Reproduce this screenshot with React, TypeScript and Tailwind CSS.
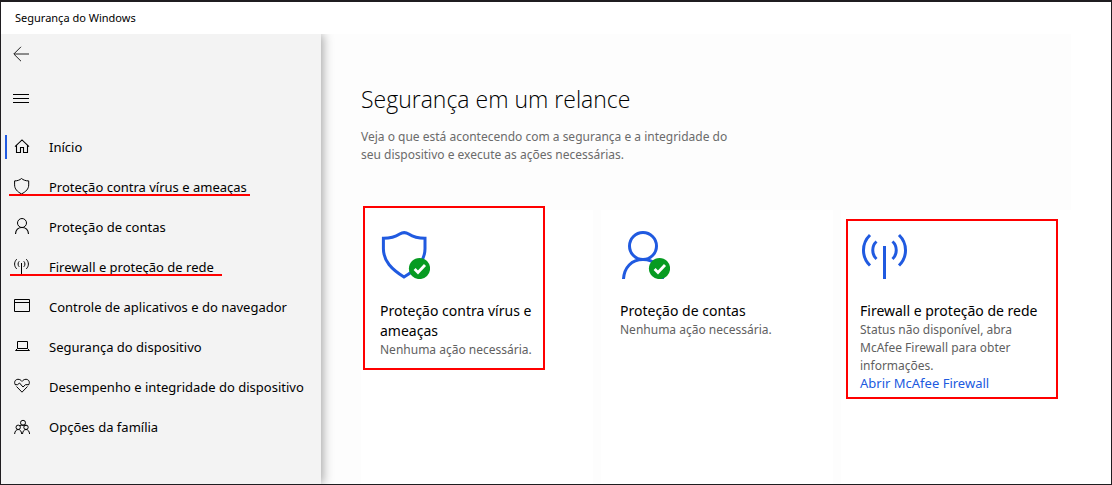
import type { ReactNode } from "react";

function CheckBadge() {
  return (
    <>
      <circle cx="38.5" cy="37.5" r="10.6" fill="#079b22" />
      <path d="M33.6 38l3.400 3.500 7-7.500" fill="none" stroke="#fff" strokeWidth="2.8" />
    </>
  );
}

function NavIcon({ children }: { children: ReactNode }) {
  return (
    <svg aria-hidden="true" className="mb-0.5 size-4 shrink-0" viewBox="0 0 16 16" fill="none" stroke="#000" strokeWidth="1">
      {children}
    </svg>
  );
}

type NavItem = { label: string; icon: ReactNode; active?: boolean; mark?: string };

const navItems: NavItem[] = [
  {
    label: "Início",
    active: true,
    icon: <path d="M1 8.600L8 1.900l7 6.700M2.500 7.300v7.200h4V9.500h3v5h4V7.300" strokeWidth="1.1" />,
  },
  {
    label: "Proteção contra vírus e ameaças",
    mark: "left-[8px] w-[241px]",
    icon: <path d="M.6 2.9C3.6 2.9 5.8 2 7.5.5 9.200 2 11.600 2.900 14.700 2.900v4c0 4-2.700 6.800-7.200 9C3.200 13.700.6 10.900.6 6.900z" />,
  },
  {
    label: "Proteção de contas",
    icon: (
      <>
        <circle cx="8" cy="5" r="4.500" />
        <path d="M1.500 16c.3-3.900 2.900-6.500 6.500-6.500s6.200 2.600 6.500 6.500" strokeWidth="1.1" />
      </>
    ),
  },
  {
    label: "Firewall e proteção de rede",
    mark: "left-[9px] w-[212px]",
    icon: <path d="M7.500 5V16M5.200 3.300c-1.500 1.600-1.500 3.900 0 5.500M9.800 3.300c1.500 1.600 1.500 3.900 0 5.500M2.700 1.200c-2.800 2.900-2.800 6.800 0 9.700M12.300 1.200c2.800 2.900 2.800 6.800 0 9.700" />,
  },
  {
    label: "Controle de aplicativos e do navegador",
    icon: <path d="M.5 1.500h15v12H.5zM.5 4.500h15" />,
  },
  {
    label: "Segurança do dispositivo",
    icon: <path d="M3.500 3.500h10v7h-10zM3.500 10.500l-2 2h14l-2-2" />,
  },
  {
    label: "Desempenho e integridade do dispositivo",
    icon: (
      <path d="M1.300 6.800C-.4 3.800 1.500 1.300 4 1.300c1.800 0 2.900.8 4 2.100 1.100-1.300 2.200-2.100 4-2.100 2.500 0 4.400 2.500 2.700 5.500M2.500 8.500L8 14.200l5.500-5.700M1 6.700h2.500L5.500 5l3.500 4 2.500-2.300H15" />
    ),
  },
  {
    label: "Opções da família",
    icon: (
      <>
        <circle cx="9" cy="4.800" r="2.500" />
        <circle cx="4.200" cy="9.300" r="2.200" />
        <circle cx="12" cy="9.300" r="2.200" />
        <path d="M.6 16c.3-2.900 1.700-4.500 3.600-4.500S7.400 13.100 7.700 16M8.500 16c.3-2.900 1.600-4.500 3.500-4.500s3.300 1.600 3.600 4.500M5.500 7.600l2-.4h3l2 .4" />
      </>
    ),
  },
];

type CardProps = { title: string; text: string; icon: ReactNode; mark?: string; link?: string };

const cards: CardProps[] = [
  {
    title: "Proteção contra vírus e ameaças",
    text: "Nenhuma ação necessária.",
    mark: "-top-1 left-[2px] h-[164px] w-[182px]",
    icon: (
      <>
        <path d="M2.400 7.300c7.700 0 12.200-1.600 16.300-4.300 2.600-1.600 6.400-1.600 9 0 4.100 2.700 8.600 4.300 16.300 4.300v10.500c0 12.500-8.500 20.500-21 28.200C10.900 38.300 2.400 30.300 2.400 17.800z" fill="none" stroke="#205ae0" strokeWidth="3" />
        <CheckBadge />
      </>
    ),
  },
  {
    title: "Proteção de contas",
    text: "Nenhuma ação necessária.",
    icon: (
      <>
        <circle cx="22" cy="15" r="13.500" fill="none" stroke="#205ae0" strokeWidth="3" />
        <path d="M2.500 48C3.200 36.500 10.500 28.500 22 28.500S41 36.500 41.500 48" fill="none" stroke="#205ae0" strokeWidth="3" />
        <CheckBadge />
      </>
    ),
  },
  {
    title: "Firewall e proteção de rede",
    text: "Status não disponível, abra McAfee Firewall para obter informações.",
    link: "Abrir McAfee Firewall",
    mark: "top-[9px] left-[5px] h-[180px] w-[212px]",
    icon: (
      <path d="M23.500 15v33M15.500 10.500c-5 4.500-5 13 0 17.500M31.500 10.500c5 4.500 5 13 0 17.500M9 4c-8.700 8.500-8.700 22 0 30.500M38 4c8.700 8.500 8.700 22 0 30.500" fill="none" stroke="#205ae0" strokeWidth="3" />
    ),
  },
];

function StatusCard({ title, text, icon, mark, link }: CardProps) {
  return (
    <section className="relative bg-white pt-[21px] pr-7 pl-[19px]">
      <svg aria-hidden="true" className="h-12 w-[50px]" viewBox="-1 0 50 48">
        {icon}
      </svg>
      <h2 className="mt-[22px] text-[14px] leading-5 text-black">{title}</h2>
      <p className="text-[12px] leading-[18px] text-[#5f5f5f]">{text}</p>
      {link && (
        <a href="#firewall" className="block text-[13px] leading-4 text-[#205ae0]">
          {link}
        </a>
      )}
      {mark && <span className={`pointer-events-none absolute border-2 border-[#ff0000] ${mark}`} />}
    </section>
  );
}

export default function App() {
  return (
    <div className="flex min-h-screen flex-col border border-t-2 border-[#1f1d20] bg-white font-['Noto_Sans','Open_Sans',sans-serif] text-black">
      <header className="flex h-8 items-center pl-[14px] text-[11px]">Segurança do Windows</header>
      <div className="flex flex-1">
        <aside className="relative z-10 w-80 shrink-0 bg-[#f3f3f3] shadow-[2px_0_10px_rgba(0,0,0,0.35)] [clip-path:inset(0_-30px_0_0)]">
          <button type="button" aria-label="Voltar" className="flex h-10 w-full items-center pl-3">
            <svg aria-hidden="true" className="size-4" viewBox="0 0 16 16" fill="none" stroke="#222">
              <path d="M16 8H1M8 .8L.8 8 8 15.200" />
            </svg>
          </button>
          <button type="button" aria-label="Menu" className="flex h-12 w-full items-center pl-3">
            <svg aria-hidden="true" className="size-4" viewBox="0 0 16 16" stroke="#000">
              <path d="M0 4.500h16M0 8.500h16M0 12.500h16" />
            </svg>
          </button>
          <nav className="pt-[5px]">
            {navItems.map((item) => (
              <a key={item.label} href="#" className="relative flex h-10 items-center pl-[13px] text-[13px]">
                {item.active && <span className="absolute left-1 h-6 w-0.5 bg-[#205ae0]" />}
                <NavIcon>{item.icon}</NavIcon>
                <span className="mt-0.5 ml-[19px] whitespace-nowrap">{item.label}</span>
                {item.mark && <span className={`absolute bottom-[11px] h-0.5 bg-[#ff0000] ${item.mark}`} />}
              </a>
            ))}
          </nav>
        </aside>
        <main className="mr-10 flex flex-1 flex-col bg-[#fdfdfd] pl-10">
          <h1 className="mt-[49px] font-['Open_Sans','Noto_Sans',sans-serif] text-[23px] leading-8 font-light">
            Segurança em um relance
          </h1>
          <p className="mt-[13px] max-w-96 text-[12px] leading-[18px] text-[#6b6b6b]">
            Veja o que está acontecendo com a segurança e a integridade do seu dispositivo e execute as ações necessárias.
          </p>
          <div className="mt-[46px] -mr-0.5 grid flex-1 grid-cols-3 gap-2">
            {cards.map((card) => (
              <StatusCard key={card.title} {...card} />
            ))}
          </div>
        </main>
      </div>
    </div>
  );
}
